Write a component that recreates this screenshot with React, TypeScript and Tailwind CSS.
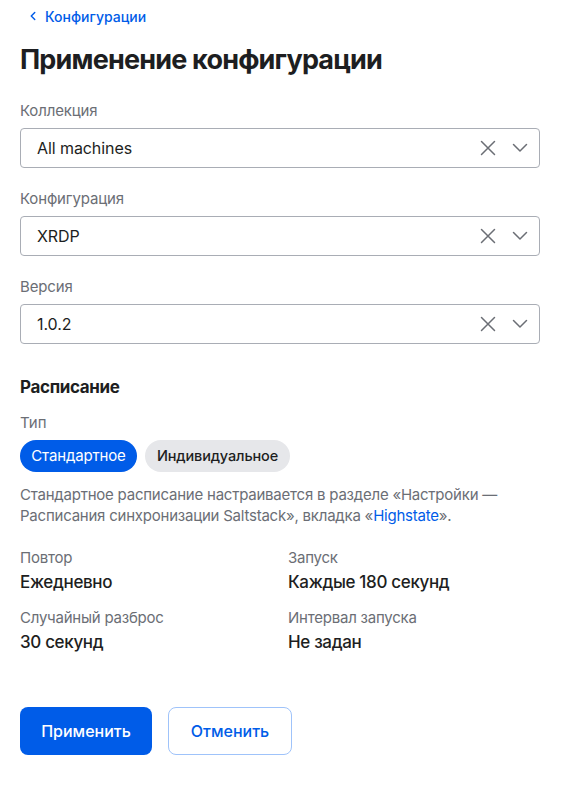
import { ChevronLeft } from 'lucide-react'

const ClearIcon = () => (
  <svg width="16" height="16" viewBox="0 0 16 16" fill="none" stroke="#6b6e75" strokeWidth="1.5" strokeLinecap="round">
    <path d="M1.5 1.5l13 13M14.5 1.5l-13 13" />
  </svg>
)

const ArrowIcon = () => (
  <svg width="16" height="16" viewBox="0 0 16 16" fill="none" stroke="#6b6e75" strokeWidth="1.5" strokeLinecap="round" strokeLinejoin="round">
    <path d="M1.5 4.5l6.5 6.5 6.5-6.5" />
  </svg>
)

const SelectField = ({ label, value }: { label: string; value: string }) => (
  <div className="mb-[21px]">
    <div className="text-[15px] leading-[20px] tracking-[-0.01em] text-[#6b6e75] mb-[7px]">{label}</div>
    <div className="h-[40px] flex items-center border border-[#a9adb5] rounded-[4px] pl-[16px] pr-[11px]">
      <span className="flex-1 text-[16px] text-[#1d1e21] tracking-[-0.005em]">{value}</span>
      <div className="flex items-center gap-[16px]">
        <ClearIcon />
        <ArrowIcon />
      </div>
    </div>
  </div>
)

const Info = ({ label, value }: { label: string; value: string }) => (
  <div>
    <div className="text-[15px] leading-[20px] tracking-[-0.015em] text-[#6b6e75]">{label}</div>
    <div className="text-[17px] leading-[24px] tracking-[-0.02em] text-[#1d1e21] mt-[2px] font-medium">{value}</div>
  </div>
)

export default function App() {
  return (
    <div className="w-[562px] h-[785px] bg-white pl-[20px] pr-[22px] font-['Inter',sans-serif]">
      <div className="flex items-center h-[32px] text-[#005ce8] text-[14px] font-medium">
        <ChevronLeft className="w-[14px] h-[14px] ml-[6px] mr-[5px]" strokeWidth={2.5} />
        Конфигурации
      </div>
      <h1 className="text-[27px] leading-[40px] font-bold tracking-[-0.03em] text-[#1d1e21] mt-[8px] mb-[21px]">
        Применение конфигурации
      </h1>
      <SelectField label="Коллекция" value="All machines" />
      <SelectField label="Конфигурация" value="XRDP" />
      <SelectField label="Версия" value="1.0.2" />
      <h2 className="text-[17px] leading-[26px] font-bold tracking-[-0.02em] text-[#1d1e21] mt-[30px]">Расписание</h2>
      <div className="text-[15px] leading-[20px] text-[#6b6e75] mt-[13px]">Тип</div>
      <div className="flex gap-[8px] mt-[7px]">
        <button className="h-[32px] w-[117px] rounded-full bg-[#005ce8] text-white text-[15px] tracking-[-0.01em]">Стандартное</button>
        <button className="h-[32px] w-[145px] rounded-full bg-[#e6e7ea] text-[#1d1e21] text-[14.5px] font-medium tracking-[-0.01em]">Индивидуальное</button>
      </div>
      <p className="text-[15px] leading-[21px] tracking-[-0.015em] text-[#6b6e75] mt-[12px]">
        Стандартное расписание настраивается в разделе «Настройки — Расписания синхронизации Saltstack», вкладка «<span className="text-[#005ce8]">Highstate</span>».
      </p>
      <div className="grid grid-cols-2 gap-x-[16px] gap-y-[14px] mt-[22px]">
        <Info label="Повтор" value="Ежедневно" />
        <Info label="Запуск" value="Каждые 180 секунд" />
        <Info label="Случайный разброс" value="30 секунд" />
        <Info label="Интервал запуска" value="Не задан" />
      </div>
      <div className="flex gap-[16px] mt-[53px]">
        <button className="h-[48px] w-[132px] rounded-[8px] bg-[#005ce8] text-white text-[16px] font-medium">Применить</button>
        <button className="h-[48px] w-[124px] rounded-[8px] border border-[#9fc3fa] text-[#005ce8] text-[16px] font-medium">Отменить</button>
      </div>
    </div>
  )
}
